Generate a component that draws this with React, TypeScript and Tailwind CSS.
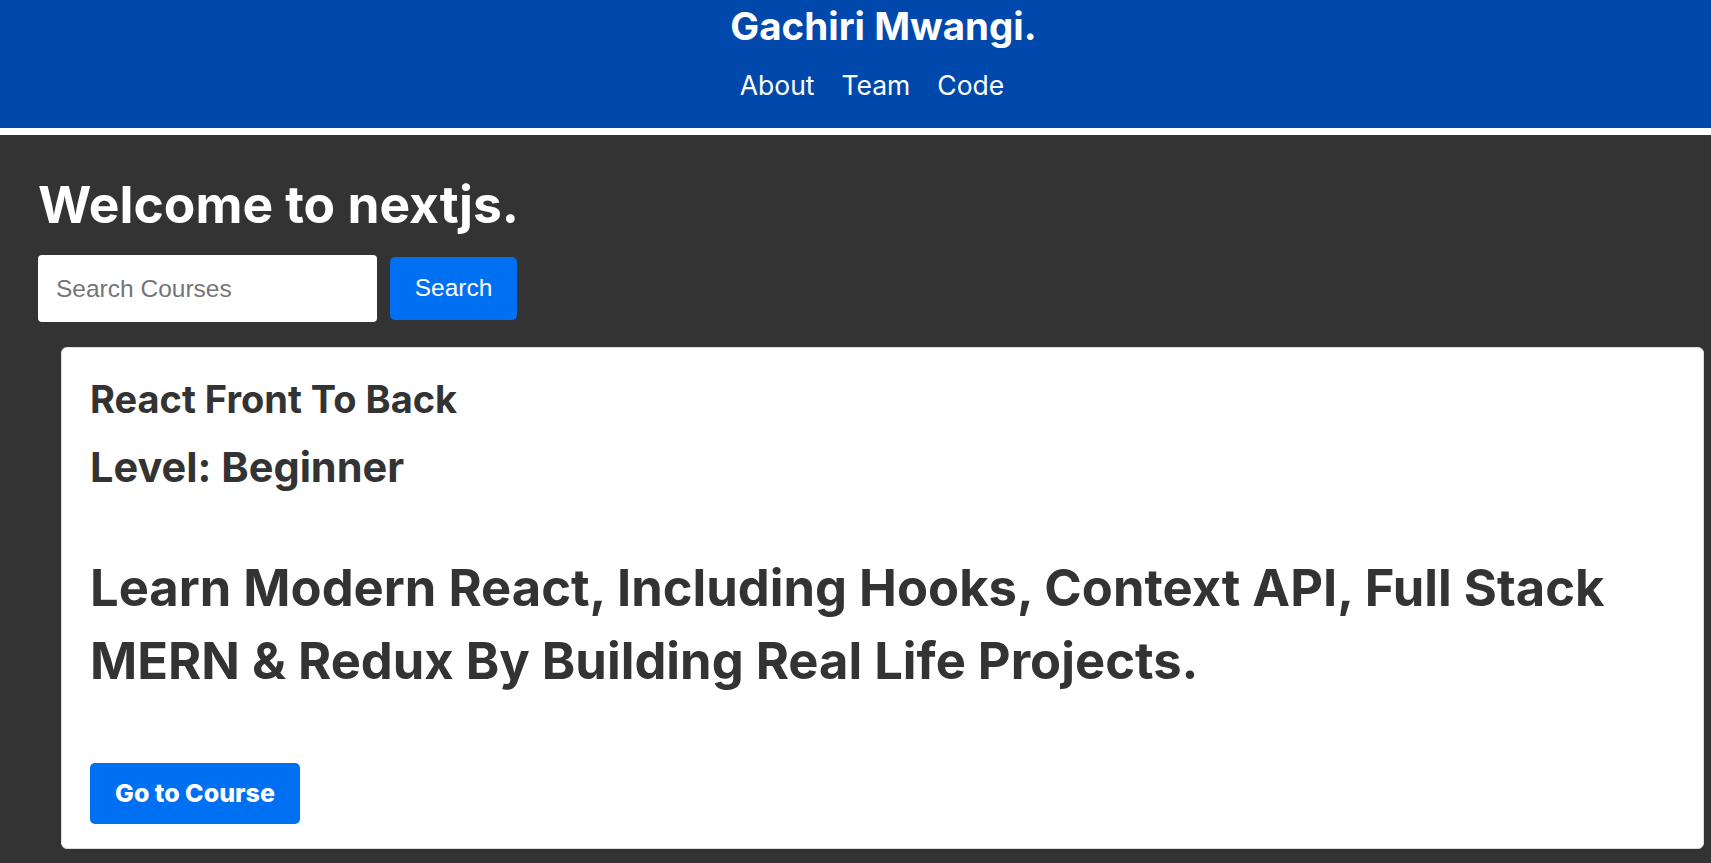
import React from "react";

export default function App() {
  return (
    <div className="h-screen overflow-hidden bg-[#333333] font-['Inter',sans-serif]">
      <header className="h-[135px] bg-[#0048ab] border-b-[7px] border-white flex flex-col items-center text-white pt-[3px]">
        <h1 className="ml-[56px] text-[38.5px] font-bold leading-[46px]">Gachiri Mwangi.</h1>
        <nav className="ml-[33px] mt-[21px] flex gap-[27px] text-[26.5px] leading-[30px]">
          <a href="#">About</a>
          <a href="#">Team</a>
          <a href="#">Code</a>
        </nav>
      </header>
      <main className="pl-[38px] pr-[7px]">
        <h1 className="mt-[39px] text-[51.5px] font-bold leading-[60px] text-white">Welcome to nextjs.</h1>
        <form className="mt-[21px] flex items-center gap-[13px]" onSubmit={(e) => e.preventDefault()}>
          <input
            className="h-[67px] w-[339px] rounded-[4px] bg-white px-[18px] font-['Liberation_Sans',sans-serif] text-[24.5px] text-[#333333] outline-none placeholder:text-[#757575]"
            placeholder="Search Courses"
          />
          <button className="h-[63px] w-[127px] rounded-[5px] bg-[#0070f3] font-['Liberation_Sans',sans-serif] text-[24.5px] text-white">
            Search
          </button>
        </form>
        <div className="ml-[23px] mt-[25px] h-[502px] rounded-[6px] border border-[#dddddd] bg-white px-[28px] pt-[28px] text-[#333333]">
          <h3 className="text-[38px] font-bold leading-[46px]">React Front To Back</h3>
          <h2 className="mt-[20px] text-[41.5px] font-bold leading-[50px]">Level: Beginner</h2>
          <p className="mt-[59px] text-[50.7px] font-bold leading-[73px]">
            Learn Modern React, Including Hooks, Context API, Full Stack MERN &amp; Redux By Building Real Life Projects.
          </p>
          <button className="mt-[66px] h-[61px] w-[210px] rounded-[5px] bg-[#0070f3] text-[25px] font-extrabold text-white">
            Go to Course
          </button>
        </div>
      </main>
    </div>
  );
}
